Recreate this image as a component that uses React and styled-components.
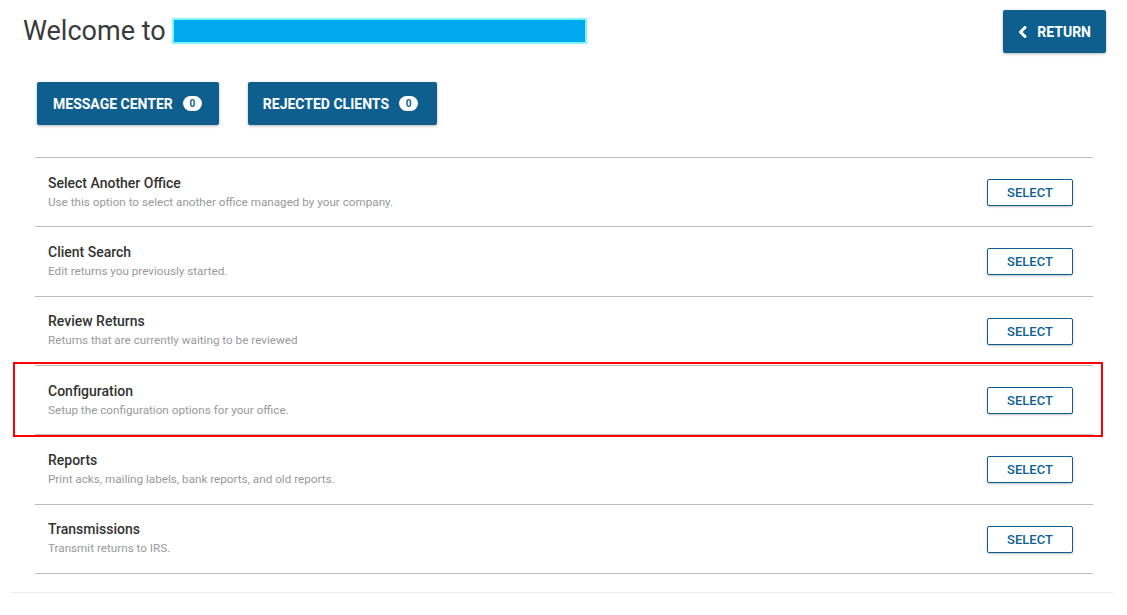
import React from "react";
import styled, { createGlobalStyle } from "styled-components";

const Global = createGlobalStyle`
  html, body { margin: 0; padding: 0; background: #fff; }
  body { font-family: Roboto, "Liberation Sans", Arial, sans-serif; color: #333; }
  * { box-sizing: border-box; }
`;

const Page = styled.div`
  width: 1127px;
  height: 615px;
  position: relative;
  overflow: hidden;
`;

const Header = styled.div`
  display: flex;
  justify-content: space-between;
  align-items: flex-start;
  padding: 10px 21px 0 23px;
`;

const Title = styled.h1`
  margin: 6px 0 0 0;
  font-size: 27px;
  font-weight: 400;
  color: #3a3a3a;
  display: flex;
  align-items: center;
  gap: 6px;
  line-height: 30px;
`;

const Redacted = styled.span`
  display: inline-block;
  width: 415px;
  height: 26px;
  background: #00a8f0;
  border: 2px solid #7ff5fb;
`;

const PrimaryButton = styled.button`
  display: inline-flex;
  align-items: center;
  gap: 10px;
  height: 43px;
  padding: 0 ${(p) => p.$pr || 16}px 0 ${(p) => p.$pl || 16}px;
  background: #0e5f8e;
  color: #fff;
  border: none;
  border-radius: 2px;
  box-shadow: 0 1px 3px rgba(0, 0, 0, 0.3);
  font-family: Roboto, "Liberation Sans", Arial, sans-serif;
  font-weight: 700;
  font-size: 14px;
  text-transform: uppercase;
  cursor: pointer;
`;

const Badge = styled.span`
  display: inline-flex;
  align-items: center;
  justify-content: center;
  min-width: 19px;
  height: 15px;
  border-radius: 8px;
  background: #fff;
  color: #0e5f8e;
  font-size: 10px;
  font-weight: 700;
`;

const ButtonRow = styled.div`
  display: flex;
  gap: 29px;
  padding: 29px 0 0 37px;
`;

const List = styled.div`
  margin: 32px 34px 0 35px;
  border-bottom: 1px solid #bdbdbd;
`;

const Row = styled.div`
  position: relative;
  display: flex;
  align-items: center;
  justify-content: space-between;
  height: 69.33px;
  border-top: 1px solid #bdbdbd;
  padding: 0 20px 1px 13px;
`;

const RowText = styled.div`
  display: flex;
  flex-direction: column;
  gap: 4px;
  margin-top: 0;
`;

const RowTitle = styled.div`
  font-size: 14px;
  font-weight: 500;
  color: #333;
`;

const RowDesc = styled.div`
  font-size: 11.7px;
  color: #999;
`;

const SelectButton = styled.button`
  width: 86px;
  height: 27px;
  background: #fff;
  border: 1px solid #0e5f8e;
  border-radius: 2px;
  box-shadow: 0 1px 2px rgba(0, 0, 0, 0.25);
  color: #0e5f8e;
  font-family: Roboto, "Liberation Sans", Arial, sans-serif;
  font-size: 13px;
  font-weight: 500;
  margin-top: 2px;
  cursor: pointer;
`;

const Highlight = styled.div`
  position: absolute;
  left: -22px;
  right: -10px;
  top: -4px;
  bottom: -3px;
  border: 2.5px solid #f00;
  pointer-events: none;
`;

const Footer = styled.div`
  margin: 18px 14px 0 11px;
  border-top: 1px solid #ececec;
`;

const rows = [
  ["Select Another Office", "Use this option to select another office managed by your company."],
  ["Client Search", "Edit returns you previously started."],
  ["Review Returns", "Returns that are currently waiting to be reviewed"],
  ["Configuration", "Setup the configuration options for your office.", true],
  ["Reports", "Print acks, mailing labels, bank reports, and old reports."],
  ["Transmissions", "Transmit returns to IRS."],
];

const Chevron = () => (
  <svg width="9" height="12" viewBox="0 0 9 12">
    <path d="M7 1.5 L2.5 6 L7 10.5" stroke="#fff" strokeWidth="3" fill="none" strokeLinecap="round" strokeLinejoin="round" />
  </svg>
);

export default function App() {
  return (
    <Page>
      <Global />
      <Header>
        <Title>
          Welcome to <Redacted />
        </Title>
        <PrimaryButton $pl={15} $pr={15}>
          <Chevron />
          Return
        </PrimaryButton>
      </Header>
      <ButtonRow>
        <PrimaryButton $pr={17}>
          Message Center <Badge>0</Badge>
        </PrimaryButton>
        <PrimaryButton $pl={15} $pr={19}>
          Rejected Clients <Badge>0</Badge>
        </PrimaryButton>
      </ButtonRow>
      <List>
        {rows.map(([t, d, hl]) => (
          <Row key={t}>
            <RowText>
              <RowTitle>{t}</RowTitle>
              <RowDesc>{d}</RowDesc>
            </RowText>
            <SelectButton>SELECT</SelectButton>
            {hl && <Highlight />}
          </Row>
        ))}
      </List>
      <Footer />
    </Page>
  );
}
